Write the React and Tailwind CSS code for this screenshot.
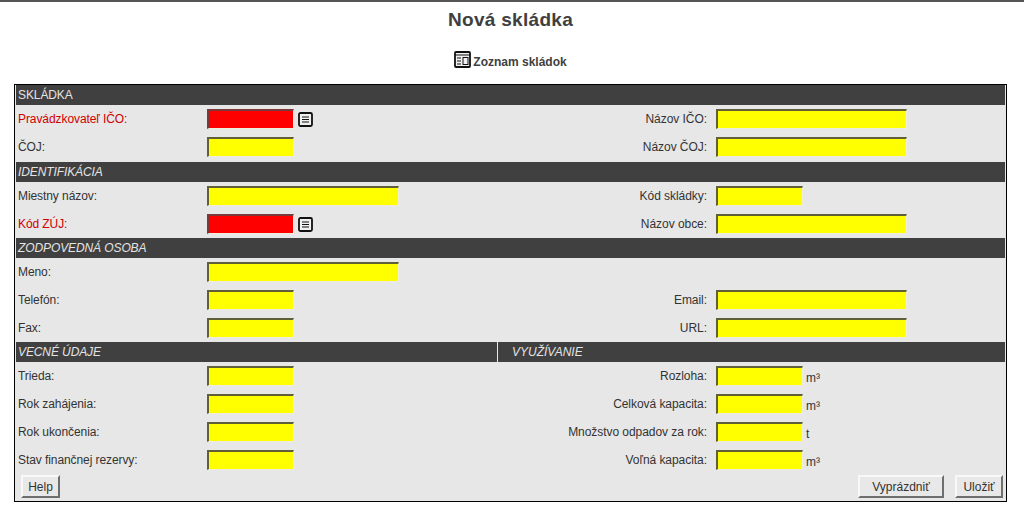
import React from 'react';

const font = { fontFamily: '"Liberation Sans", Arial, sans-serif' };

const Field = ({ width, red }) => (
  <input
    type="text"
    className={`h-[20px] border-t-2 border-l-2 border-r border-b border-t-[#5f5f3a] border-l-[#5f5f3a] border-r-[#eeeedd] border-b-[#eeeedd] ${width} ${red ? 'bg-[#ff0000] border-t-[#7a3a3a] border-l-[#7a3a3a]' : 'bg-[#ffff00]'}`}
  />
);

const ListIcon = () => (
  <svg width="15" height="15" viewBox="0 0 15 15" className="ml-[4px]">
    <rect x="1" y="1" width="13" height="13" rx="1.5" fill="#f0f0f0" stroke="#111" strokeWidth="1.8" />
    <path d="M4 5h7M4 7.5h7M4 10h7" stroke="#111" strokeWidth="1.2" />
  </svg>
);

const Header = ({ children, italic }) => (
  <div className={`h-[20px] bg-[#404040] pl-[2px] text-[12px] leading-[20px] tracking-[-0.1px] text-[#e4e4e4] ${italic ? 'italic' : ''}`}>
    {children}
  </div>
);

const Left = ({ label, red, wide, icon }) => (
  <div className="flex w-[482px] items-center">
    <label className={`w-[191px] pl-[2px] text-[12px] tracking-[-0.08px] ${red ? 'text-[#d00000]' : 'text-[#333333]'}`}>{label}</label>
    {label && <Field width={wide ? 'w-[192px]' : 'w-[87px]'} red={red} />}
    {icon && <ListIcon />}
  </div>
);

const Right = ({ label, wide, unit }) => (
  <div className="flex flex-1 items-center">
    <label className="w-[209px] text-right text-[12px] tracking-[-0.05px] text-[#333333]">{label}</label>
    {label && <Field width={wide ? 'ml-[9px] w-[191px]' : 'ml-[9px] w-[87px]'} />}
    {unit && <span className="ml-[3px] mt-[3px] text-[12px] text-[#333333]">{unit}</span>}
  </div>
);

const Row = ({ children }) => <div className="flex h-[28px] items-center">{children}</div>;

const Button = ({ children, width }) => (
  <button className={`h-[23px] border-2 border-t-[#f8f8f8] border-l-[#f8f8f8] border-r-[#6e6e6e] border-b-[#6e6e6e] bg-[#e8e8e8] text-[12px] text-[#333333] ${width}`}>
    {children}
  </button>
);

export default function App() {
  return (
    <div className="h-[509px] w-[1024px] overflow-hidden bg-white" style={font}>
      <div className="h-[2px] bg-[#555555]" />
      <h1 className="mt-[7px] pr-[3px] text-center text-[19px] leading-[22px] font-bold tracking-[0.3px] text-[#404040]">Nová skládka</h1>
      <div className="mt-[20px] flex h-[20px] items-end justify-center pr-[3px]">
        <svg width="17" height="17" viewBox="0 0 17 17" className="mb-[3px] mr-[2px]">
          <rect x="1" y="1" width="15" height="15" rx="1" fill="#f0f0f0" stroke="#111" strokeWidth="1.8" />
          <path d="M1 4h15M3 7h4M3 10h4M3 13h4" stroke="#111" strokeWidth="1" />
          <rect x="9" y="6.5" width="5" height="7" fill="none" stroke="#111" strokeWidth="1" />
        </svg>
        <a className="text-[12px] font-bold text-[#404040]">Zoznam skládok</a>
      </div>

      <div className="ml-[14px] mt-[13px] h-[418px] w-[993px] border border-black bg-[#e7e7e7] px-[1px]">
        <Header>SKLÁDKA</Header>
        <Row>
          <Left label="Pravádzkovateľ IČO:" red icon />
          <Right label="Názov IČO:" wide />
        </Row>
        <Row>
          <Left label="ČOJ:" />
          <Right label="Názov ČOJ:" wide />
        </Row>
        <div className="h-[1px]" />
        <Header italic>IDENTIFIKÁCIA</Header>
        <Row>
          <Left label="Miestny názov:" wide />
          <Right label="Kód skládky:" />
        </Row>
        <Row>
          <Left label="Kód ZÚJ:" red icon />
          <Right label="Názov obce:" wide />
        </Row>
        <Header italic>ZODPOVEDNÁ OSOBA</Header>
        <Row>
          <Left label="Meno:" wide />
        </Row>
        <Row>
          <Left label="Telefón:" />
          <Right label="Email:" wide />
        </Row>
        <Row>
          <Left label="Fax:" />
          <Right label="URL:" wide />
        </Row>
        <div className="flex h-[20px]">
          <div className="w-[481px] bg-[#404040] pl-[2px] text-[12px] leading-[20px] tracking-[-0.1px] italic text-[#e4e4e4]">VECNÉ ÚDAJE</div>
          <div className="ml-[1px] flex-1 bg-[#404040] pl-[14px] text-[12px] leading-[20px] italic text-[#e4e4e4]">VYUŽÍVANIE</div>
        </div>
        <Row>
          <Left label="Trieda:" />
          <Right label="Rozloha:" unit="m³" />
        </Row>
        <Row>
          <Left label="Rok zahájenia:" />
          <Right label="Celková kapacita:" unit="m³" />
        </Row>
        <Row>
          <Left label="Rok ukončenia:" />
          <Right label="Množstvo odpadov za rok:" unit="t" />
        </Row>
        <Row>
          <Left label="Stav finančnej rezervy:" />
          <Right label="Voľná kapacita:" unit="m³" />
        </Row>
        <div className="mt-[1px] flex items-center pl-[5px] pr-[2px]">
          <Button width="w-[39px]">Help</Button>
          <div className="flex-1" />
          <Button width="w-[86px]">Vyprázdniť</Button>
          <div className="w-[11px]" />
          <Button width="w-[48px]">Uložiť</Button>
        </div>
      </div>
    </div>
  );
}
